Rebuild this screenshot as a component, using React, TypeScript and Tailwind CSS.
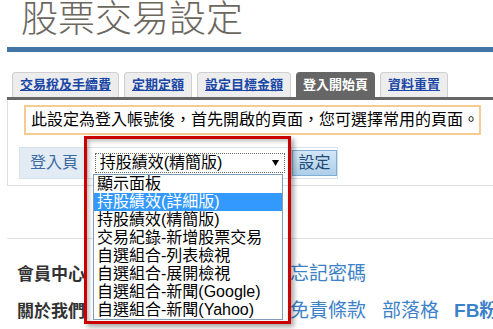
import React from 'react';

const FONT = '"Liberation Sans", "Noto Sans CJK TC", sans-serif';

const tabs = [
  { label: '交易稅及手續費', active: false },
  { label: '定期定額', active: false },
  { label: '設定目標金額', active: false },
  { label: '登入開始頁', active: true },
  { label: '資料重置', active: false },
];

const options = [
  '顯示面板',
  '持股績效(詳細版)',
  '持股績效(精簡版)',
  '交易紀錄-新增股票交易',
  '自選組合-列表檢視',
  '自選組合-展開檢視',
  '自選組合-新聞(Google)',
  '自選組合-新聞(Yahoo)',
];

export default function App(): React.ReactElement {
  return (
    <div className="relative w-[493px] h-[329px] overflow-hidden bg-white" style={{ fontFamily: FONT }}>
      {/* Title */}
      <div className="h-[47px] pl-[21px] pt-[1px]">
        <h1 className="text-[37px] leading-none font-light text-[#6b665e]">股票交易設定</h1>
      </div>
      <div className="ml-[7px] h-[5px] bg-[#4574a7]" />

      {/* Tabs */}
      <div className="mt-[20px] ml-[7px] flex items-end gap-[5px] pl-[5px]">
        {tabs.map((t) =>
          t.active ? (
            <div
              key={t.label}
              className="h-[25px] px-[6px] rounded-t-[4px] bg-[#666] border border-[#666] border-b-0 flex items-center text-[13px] font-bold text-white"
            >
              {t.label}
            </div>
          ) : (
            <div
              key={t.label}
              className="h-[25px] px-[7px] rounded-t-[4px] bg-[#ededed] border border-[#cfcfcf] border-b-0 flex items-center text-[13px] font-bold text-[#1a47a6] underline"
            >
              {t.label}
            </div>
          ),
        )}
      </div>
      <div className="ml-[7px] h-[3px] bg-[#666]" />

      {/* Panel */}
      <div className="ml-[7px] border-l border-b border-[#dedede] pt-[5px] pb-[6px]">
        <div className="ml-[16px] w-[457px] h-[30px] border-2 border-[#f6cb92] flex items-center pl-[5px] text-[16px] text-black">
          此設定為登入帳號後，首先開啟的頁面，您可選擇常用的頁面。
        </div>
        <div className="mt-[12px] ml-[11px] w-[319px] h-[32px] border border-[#d7e1ec] flex">
          <div className="w-[68px] bg-[#e3ebf5] flex items-center pl-[10px] text-[16px] text-[#3d6ba3]">登入頁</div>
          <div className="w-[204px] flex items-center pl-[7px]">
            <div className="w-[190px] h-[20px] border border-dotted border-[#6b6b6b] flex items-center pl-[4px] pr-[5px] text-[16px] text-black">
              <span className="flex-1 leading-none">持股績效(精簡版)</span>
              <svg width="7" height="6" viewBox="0 0 7 6">
                <path d="M0 0H7L3.5 6Z" fill="#000" />
              </svg>
            </div>
          </div>
          <div className="flex-1 border-l border-[#d7e1ec] flex items-center justify-center">
            <button className="w-[45px] h-[26px] border border-[#7fadd6] bg-gradient-to-b from-[#d2e6f5] to-[#aecfea] text-[16px] text-[#1e4a78] leading-none">
              設定
            </button>
          </div>
        </div>
      </div>

      {/* Footer */}
      <div className="mt-[52px] ml-[7px] border-t border-[#e0e0e0] pt-[17px]">
        <div className="h-[37px] flex items-center pl-[10px] whitespace-nowrap">
          <span className="w-[273px] shrink-0 text-[17px] font-bold text-[#333]">會員中心</span>
          <span className="shrink-0 text-[19px] text-[#3d82c9]">忘記密碼</span>
        </div>
        <div className="h-[37px] flex items-center pl-[10px] whitespace-nowrap">
          <span className="w-[273px] shrink-0 text-[17px] font-bold text-[#333]">關於我們</span>
          <span className="shrink-0 text-[19px] text-[#3d82c9]">免責條款</span>
          <span className="shrink-0 ml-[16px] text-[19px] text-[#3d82c9]">部落格</span>
          <span className="shrink-0 ml-[15px] text-[19px] font-bold text-[#3d82c9]">FB粉絲團</span>
        </div>
      </div>

      {/* Annotation frame */}
      <div className="absolute left-[84px] top-[136px] w-[207px] h-[188px] border-[3px] border-[#c80000] shadow-[inset_2px_2px_4px_rgba(0,0,0,0.28),3px_3px_5px_rgba(0,0,0,0.35)] pointer-events-none" />

      {/* Open select list */}
      <div className="absolute left-[93px] top-[174px] w-[190px] h-[146px] border border-[#7f9db9] bg-white text-[16px] text-black">
        {options.map((o, i) => (
          <div
            key={o}
            className={
              i === 1
                ? 'h-[18px] leading-[18px] pl-[3px] bg-[#3399ff] text-white whitespace-nowrap overflow-hidden'
                : 'h-[18px] leading-[18px] pl-[3px] whitespace-nowrap overflow-hidden'
            }
          >
            {o}
          </div>
        ))}
      </div>
    </div>
  );
}
